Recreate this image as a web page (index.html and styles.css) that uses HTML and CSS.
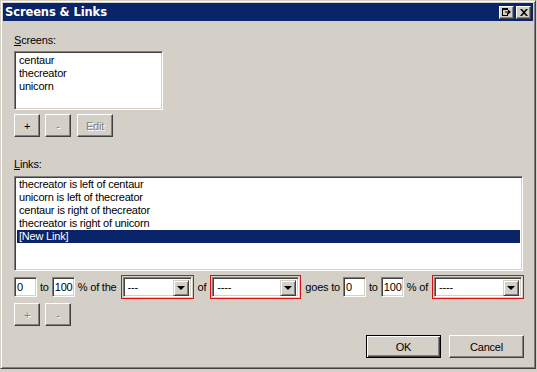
FILE: index.html
```html
<!DOCTYPE html>
<html lang="en">
  <head>
    <meta charset="UTF-8" />
    <title>Screens &amp; Links</title>
    <link rel="stylesheet" href="styles.css">
  </head>
  <body>
    <div class="window">
      <div class="titlebar">
        <span class="title">Screens &amp; Links</span>
        <div class="caption-btns">
          <span class="cap-btn">
            <svg width="9" height="8" viewBox="0 0 9 8">
              <path d="M0 0h6v2H0zM0 2h1v6H0zM0 7h6v1H0zM5 5h1v2H5zM3 3.5h4v1H3z" fill="#000"/>
              <path d="M6 1.5l3 2.5-3 2.5z" fill="#000"/>
            </svg>
          </span>
          <span class="cap-btn">
            <svg width="8" height="7" viewBox="0 0 8 7">
              <path d="M0 0h2l2 2.2L6 0h2L5 3.5 8 7H6L4 4.8 2 7H0l3-3.5z" fill="#000"/>
            </svg>
          </span>
        </div>
      </div>

      <div class="content">
        <div class="label"><u>S</u>creens:</div>
        <ul class="listbox screens">
          <li>centaur</li>
          <li>thecreator</li>
          <li>unicorn</li>
        </ul>
        <div class="btn-row">
          <button class="btn small">+</button>
          <button class="btn small" disabled>-</button>
          <button class="btn edit" disabled>Edit</button>
        </div>

        <div class="label links-label"><u>L</u>inks:</div>
        <ul class="listbox links">
          <li>thecreator is left of centaur</li>
          <li>unicorn is left of thecreator</li>
          <li>centaur is right of thecreator</li>
          <li>thecreator is right of unicorn</li>
          <li class="selected">[New Link]</li>
        </ul>

        <div class="link-row">
          <span class="field">0</span>
          <span class="word">to</span>
          <span class="field">100</span>
          <span class="word">% of the</span>
          <span class="combo-frame c1">
            <span class="combo"><span class="combo-text">---</span><span class="drop"></span></span>
          </span>
          <span class="word">of</span>
          <span class="combo-frame c2">
            <span class="combo"><span class="combo-text">----</span><span class="drop"></span></span>
          </span>
          <span class="word">goes to</span>
          <span class="field">0</span>
          <span class="word">to</span>
          <span class="field">100</span>
          <span class="word">% of</span>
          <span class="combo-frame c3">
            <span class="combo"><span class="combo-text">----</span><span class="drop"></span></span>
          </span>
        </div>

        <div class="btn-row lower">
          <button class="btn small" disabled>+</button>
          <button class="btn small" disabled>-</button>
        </div>

        <div class="footer">
          <button class="btn action default">OK</button>
          <button class="btn action">Cancel</button>
        </div>
      </div>
    </div>
  </body>
</html>
```

FILE: styles.css
```css
* {
  margin: 0;
  padding: 0;
  box-sizing: border-box;
  list-style: none;
}
body {
  background: #d4d0c8;
  font: 11px "Liberation Sans", Arial, sans-serif;
  letter-spacing: -0.2px;
  color: #000;
}
.window {
  width: 536px;
  height: 369px;
  padding: 2px;
  background: #d4d0c8;
  border: 1px solid;
  border-color: #d4d0c8 #404040 #404040 #d4d0c8;
  box-shadow: inset 1px 1px #fff, inset -1px -1px #808080;
}
.titlebar {
  height: 18px;
  background: #0a246a;
  display: flex;
  align-items: center;
  justify-content: space-between;
  padding: 0 2px 0 2px;
}
.title {
  color: #fff;
  font-weight: bold;
  font-family: "DejaVu Sans", sans-serif;
  font-size: 11.5px;
  letter-spacing: -0.1px;
}
.caption-btns {
  display: flex;
  gap: 2px;
}
.cap-btn {
  width: 15px;
  height: 13px;
  background: #d4d0c8;
  border: 1px solid;
  border-color: #fff #404040 #404040 #fff;
  box-shadow: inset -1px -1px #808080;
  display: flex;
  align-items: center;
  justify-content: center;
}
.content {
  padding: 0 9px 0 11px;
}
.label {
  line-height: 13px;
  margin-top: 13px;
}
.links-label {
  margin-top: 21px;
}
.listbox {
  background: #fff;
  border: 1px solid;
  border-color: #808080 #fff #fff #808080;
  box-shadow: inset 1px 1px #404040, inset -1px -1px #d4d0c8;
  padding: 1px 2px;
}
.listbox li {
  line-height: 13px;
  padding-left: 2px;
}
.screens {
  width: 149px;
  height: 59px;
  margin-top: 4px;
  padding-top: 2px;
}
.links {
  width: 509px;
  height: 95px;
  margin-top: 5px;
}
.links li.selected {
  background: #0a246a;
  color: #fff;
}
.btn-row {
  display: flex;
  margin-top: 4px;
  gap: 5px;
}
.btn {
  height: 23px;
  font: inherit;
  letter-spacing: inherit;
  background: #d4d0c8;
  color: #000;
  border: 1px solid;
  border-color: #fff #404040 #404040 #fff;
  box-shadow: inset -1px -1px #808080;
}
.btn:disabled {
  color: #808080;
  text-shadow: 1px 1px #fff;
}
.btn.small {
  width: 26px;
}
.btn.edit {
  width: 36px;
  margin-left: 1px;
}
.btn-row.lower {
  margin-top: 4px;
}
.link-row {
  display: flex;
  align-items: center;
  margin-top: 4px;
  height: 24px;
  white-space: nowrap;
}
.link-row > span {
  flex-shrink: 0;
}
.field {
  width: 23px;
  height: 20px;
  background: #fff;
  border: 1px solid;
  border-color: #808080 #fff #fff #808080;
  box-shadow: inset 1px 1px #404040, inset -1px -1px #d4d0c8;
  padding: 2px 0 0 2px;
  line-height: 14px;
}
.word {
  padding: 0 3px;
}
.combo-frame {
  border: 1px solid #d80f0f;
  padding: 1px;
  height: 24px;
  margin: 0 1px;
}
.c1 {
  width: 73px;
}
.c2 {
  width: 91px;
}
.c3 {
  width: 92px;
}
.combo {
  display: flex;
  height: 20px;
  background: #fff;
  border: 1px solid;
  border-color: #808080 #fff #fff #808080;
  box-shadow: inset 1px 1px #404040, inset -1px -1px #d4d0c8;
  padding: 2px;
}
.combo-text {
  flex: 1;
  padding-left: 2px;
  line-height: 15px;
}
.drop {
  width: 16px;
  height: 16px;
  position: relative;
  background: #d4d0c8;
  border: 1px solid;
  border-color: #d4d0c8 #404040 #404040 #d4d0c8;
  box-shadow: inset 1px 1px #fff, inset -1px -1px #808080;
}
.drop::after {
  content: "";
  position: absolute;
  left: 3px;
  top: 5px;
  border-style: solid;
  border-width: 4px 4px 0 4px;
  border-color: #000 transparent transparent transparent;
}
.footer {
  display: flex;
  justify-content: flex-end;
  gap: 8px;
  margin-top: 9px;
}
.btn.action {
  width: 75px;
}
.btn.default {
  border: 1px solid #000;
  box-shadow: inset 1px 1px #fff, inset -1px -1px #404040, inset -2px -2px #808080;
}
```
